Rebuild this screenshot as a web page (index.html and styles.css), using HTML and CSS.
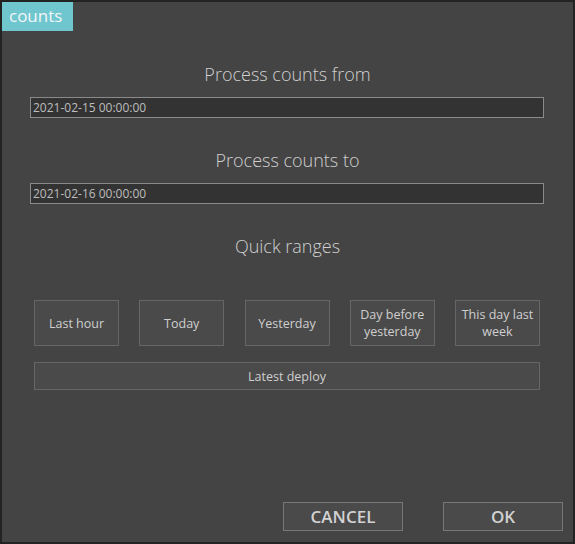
FILE: index.html
```html
<!DOCTYPE html>
<html>
<head>
<meta charset="utf-8">
<link rel="stylesheet" href="styles.css">
</head>
<body>
<div class="dialog">
  <div class="tab">counts</div>
  <div class="content">
    <h2 class="title first">Process counts from</h2>
    <div class="field">2021-02-15 00:00:00</div>
    <h2 class="title">Process counts to</h2>
    <div class="field">2021-02-16 00:00:00</div>
    <h2 class="title">Quick ranges</h2>
    <div class="ranges">
      <button class="range">Last hour</button>
      <button class="range">Today</button>
      <button class="range">Yesterday</button>
      <button class="range">Day before yesterday</button>
      <button class="range">This day last week</button>
    </div>
    <button class="deploy">Latest deploy</button>
  </div>
  <div class="footer">
    <button class="action">CANCEL</button>
    <button class="action">OK</button>
  </div>
</div>
</body>
</html>
```
FILE: styles.css
```css
html, body {
  margin: 0;
  padding: 0;
  background: #222;
}
.dialog {
  width: 575px;
  height: 544px;
  box-sizing: border-box;
  border: 2px solid #232323;
  background: #444444;
  display: flex;
  flex-direction: column;
  font-family: "Open Sans", "DejaVu Sans", sans-serif;
  color: #cfcfcf;
}
.tab {
  align-self: flex-start;
  width: 71px;
  box-sizing: border-box;
  height: 29px;
  line-height: 27px;
  padding: 0 0 0 7px;
  background: #6fc6cf;
  color: #f2f6f7;
  font-size: 17px;
  font-weight: 400;
}
.content {
  flex: 1;
  display: flex;
  flex-direction: column;
}
.title {
  margin: 30px 0 11px;
  height: 24px;
  line-height: 24px;
  text-align: center;
  font-size: 18px;
  font-weight: 300;
  color: #d0d0d0;
}
.title.first {
  margin-top: 31px;
}
.field {
  margin: 0 29px 0 28px;
  height: 21px;
  box-sizing: border-box;
  border: 1px solid #8a8a8a;
  background: #333333;
  font-size: 12px;
  line-height: 19px;
  padding-left: 2px;
  color: #bdbdbd;
}
.ranges {
  margin: 31px 33px 0 32px;
  display: flex;
  justify-content: space-between;
}
.range {
  width: 85px;
  height: 46px;
  box-sizing: border-box;
  border: 1px solid #666;
  background: #4a4a4a;
  color: #cfcfcf;
  font-family: inherit;
  font-size: 12.5px;
  line-height: 17px;
  padding: 0 4px;
}
.deploy {
  margin: 16px 33px 0 32px;
  height: 28px;
  box-sizing: border-box;
  border: 1px solid #666;
  background: #4a4a4a;
  color: #cfcfcf;
  font-family: inherit;
  font-size: 12.5px;
}
.footer {
  display: flex;
  justify-content: flex-end;
  gap: 40px;
  padding: 0 10px 11px 0;
}
.action {
  width: 120px;
  height: 29px;
  box-sizing: border-box;
  border: 1px solid #777;
  background: #4a4a4a;
  color: #d2d2d2;
  font-family: inherit;
  font-size: 17px;
  font-weight: 600;
  padding: 0;
}
```
